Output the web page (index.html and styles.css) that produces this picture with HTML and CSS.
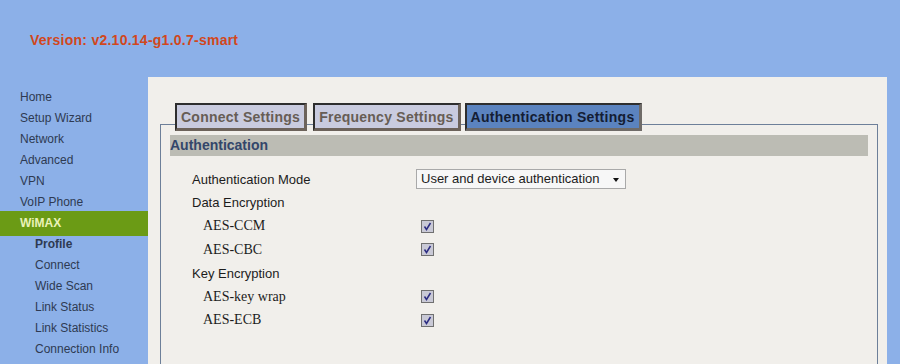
FILE: index.html
```html
<!doctype html>
<html>
<head>
<meta charset="utf-8">
<link rel="stylesheet" href="styles.css">
</head>
<body>
<div class="top">
	<div class="version">Version: v2.10.14-g1.0.7-smart</div>
</div>

<div class="wrap">
	<ul class="menu">
		<li>Home</li>
		<li>Setup Wizard</li>
		<li>Network</li>
		<li>Advanced</li>
		<li>VPN</li>
		<li>VoIP Phone</li>
		<li class="on">WiMAX</li>
		<li class="sub cur">Profile</li>
		<li class="sub">Connect</li>
		<li class="sub">Wide Scan</li>
		<li class="sub">Link Status</li>
		<li class="sub">Link Statistics</li>
		<li class="sub">Connection Info</li>
	</ul>

	<div class="main">
		<div class="tabs">
			<a href="javascript:;" class="tab">Connect Settings</a>
			<a href="javascript:;" class="tab">Frequency Settings</a>
			<a href="javascript:;" class="tab act">Authentication Settings</a>
		</div>
		<div class="box">
			<div class="bar">Authentication</div>
			<div class="form">
				<div class="lbl">Authentication Mode</div>
				<div class="val">
					<div class="sel">User and device authentication<span class="arr"></span></div>
				</div>
				<div class="lbl">Data Encryption</div>
				<div class="val"></div>
				<div class="lbl opt">AES-CCM</div>
				<div class="val"><span class="chk"><svg width="11" height="11" viewBox="0 0 11 11"><path d="M2.5 5.5 L4.5 8.5 L8.5 2" fill="none" stroke="#2c2c82" stroke-width="1.5"/></svg></span></div>
				<div class="lbl opt">AES-CBC</div>
				<div class="val"><span class="chk"><svg width="11" height="11" viewBox="0 0 11 11"><path d="M2.5 5.5 L4.5 8.5 L8.5 2" fill="none" stroke="#2c2c82" stroke-width="1.5"/></svg></span></div>
				<div class="lbl">Key Encryption</div>
				<div class="val"></div>
				<div class="lbl opt">AES-key wrap</div>
				<div class="val"><span class="chk"><svg width="11" height="11" viewBox="0 0 11 11"><path d="M2.5 5.5 L4.5 8.5 L8.5 2" fill="none" stroke="#2c2c82" stroke-width="1.5"/></svg></span></div>
				<div class="lbl opt">AES-ECB</div>
				<div class="val"><span class="chk"><svg width="11" height="11" viewBox="0 0 11 11"><path d="M2.5 5.5 L4.5 8.5 L8.5 2" fill="none" stroke="#2c2c82" stroke-width="1.5"/></svg></span></div>
			</div>
		</div>
	</div>
</div>
</body>
</html>
```

FILE: styles.css
```css
*{
	margin:0; padding:0; list-style:none; box-sizing:border-box;
}
html,body{
	height:100%; overflow:hidden;
}
body{
	background:#8cb0e8; font-family:"Liberation Sans",Arial,sans-serif;
}
.top{
	height:77px; display:flex; align-items:center; padding-left:30px;
}
	.version{
		color:#d1471c; font-size:14px; font-weight:bold; letter-spacing:.25px;
		margin-top:3px;
	}
.wrap{
	display:flex; height:287px;
}
.menu{
	width:148px; padding-top:10px;
}
	.menu li{
		height:21px; line-height:21px; padding-left:20px;
		font-size:12px; color:#2e3a52;
	}
	.menu li.on{
		height:25px; line-height:25px; margin:-2px 0;
		background:#6b9b15; color:#eaf2b8; font-weight:bold;
	}
	.menu li.sub{
		padding-left:35px;
	}
	.menu li.cur{
		font-weight:bold;
	}
.main{
	width:739px; background:#f1efeb; padding:26px 9px 0 12px;
}
.tabs{
	display:flex; gap:6px; padding-left:15px; position:relative; z-index:2;
}
	.tab{
		display:block; height:28px; line-height:24px; padding:0 4px;
		border-style:solid; border-width:2px 3px 3px 2px;
		border-color:#2e2e2e #6c625a #6c625a #2e2e2e; background:#c9cbdf;
		font-size:14px; letter-spacing:.25px; font-weight:bold; color:#675d55; text-decoration:none;
	}
	.tab.act{
		margin-left:-2px; letter-spacing:.3px;
		background:#5b83bf; color:#141d33; border-color:#2e2e2e #6f6b68 #6f6b68 #2e2e2e;
	}
.box{
	margin-top:-7px; border:1px solid #6d7f99; border-bottom:none;
	height:242px; padding:10px 9px 0 9px;
}
	.bar{
		height:21px; line-height:21px; background:#bcbcb4;
		font-size:14px; font-weight:bold; color:#33466a;
	}
.form{
	display:grid; grid-template-columns:224px 1fr; grid-auto-rows:23.5px;
	margin-top:11.5px; padding-left:22px;
}
	.lbl{
		display:flex; align-items:center; font-size:13px; color:#1c1c1c;
	}
	.lbl.opt{
		padding-left:11px; font-family:"Liberation Serif","Times New Roman",serif; font-size:14px;
	}
	.val{
		display:flex; align-items:center;
	}
.sel{
	width:210px; height:20px; border:1px solid #a9a9a9; background:#f7f7f7;
	font-size:13px; line-height:18px; padding-left:4px;
	color:#1c1c1c; position:relative;
}
	.arr{
		position:absolute; right:6px; top:8px;
		border-left:3.5px solid transparent; border-right:3.5px solid transparent;
		border-top:4px solid #111;
	}
.chk{
	display:block; width:13px; height:13px; margin-left:5px;
	border:1px solid #707070; background:#c9c9d6; line-height:0;
}
```
